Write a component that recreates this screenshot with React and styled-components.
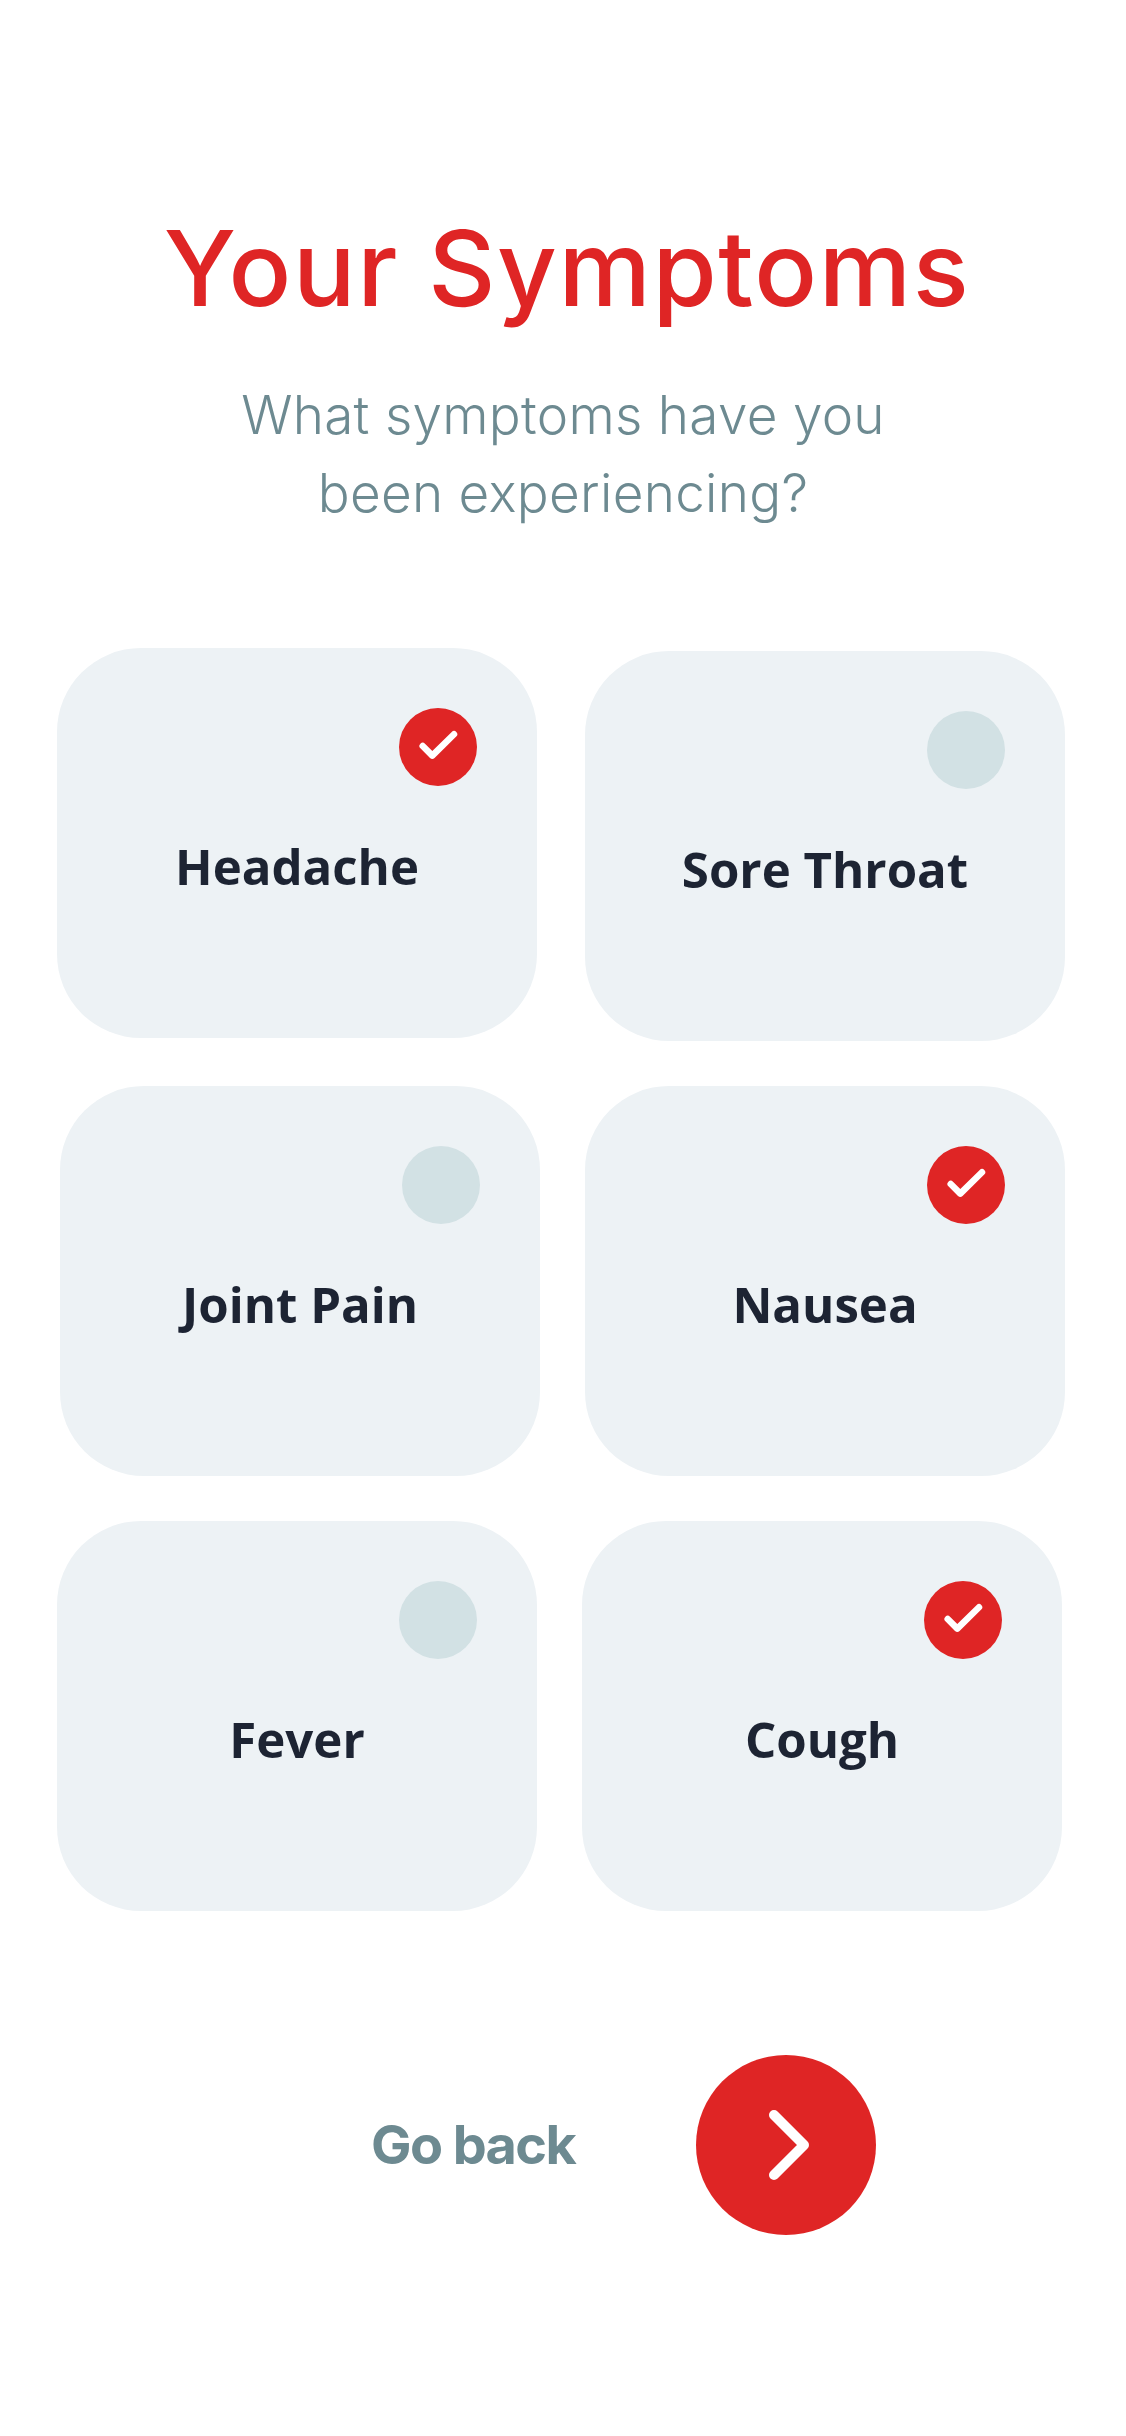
import React from "react";
import styled, { createGlobalStyle } from "styled-components";

const Global = createGlobalStyle`
  html, body { margin: 0; padding: 0; background: #ffffff; }
  #root { width: 1126px; height: 2436px; overflow: hidden; }
`;

const RED = "#df2525";
const SLATE = "#6d8a91";

const Page = styled.main`
  display: flex;
  flex-direction: column;
  box-sizing: border-box;
  width: 1126px;
  height: 2436px;
  padding-top: 208px;
  font-family: "Inter", "Noto Sans", sans-serif;
`;

const Title = styled.h1`
  margin: 0 0 0 8px;
  text-align: center;
  font-size: 104px;
  line-height: 120px;
  font-weight: 500;
  letter-spacing: 1.6px;
  color: ${RED};
`;

const Subtitle = styled.p`
  margin: 48px 0 0;
  text-align: center;
  font-size: 53px;
  line-height: 78px;
  font-weight: 300;
  letter-spacing: 0.3px;
  color: ${SLATE};
`;

const Grid = styled.section`
  display: flex;
  flex-direction: column;
  gap: 45px;
  margin-top: 116px;
`;

const Row = styled.div`
  display: flex;
  align-items: flex-start;
  gap: ${(p) => p.$gap}px;
  padding-left: ${(p) => p.$left}px;
`;

const Card = styled.div`
  position: relative;
  display: flex;
  justify-content: center;
  box-sizing: border-box;
  width: 480px;
  height: 390px;
  margin-top: ${(p) => p.$drop || 0}px;
  padding-top: 184px;
  border-radius: 84px;
  background: #edf2f5;
`;

const Label = styled.span`
  font-family: "Open Sans", "Noto Sans", sans-serif;
  font-size: 49.2px;
  line-height: 68px;
  font-weight: 700;
  color: #1d2433;
`;

const Mark = styled.span`
  position: absolute;
  top: 60px;
  right: 60px;
  display: flex;
  width: 78px;
  height: 78px;
  border-radius: 50%;
  background: ${(p) => (p.$on ? RED : "#d2e1e4")};
`;

const Footer = styled.footer`
  display: flex;
  align-items: center;
  gap: 119px;
  margin-top: 144px;
  padding-left: 371px;
`;

const Back = styled.span`
  width: 206px;
  font-size: 54px;
  line-height: 60px;
  font-weight: 700;
  letter-spacing: -1.6px;
  white-space: nowrap;
  color: ${SLATE};
`;

const Next = styled.button`
  display: flex;
  width: 180px;
  height: 180px;
  padding: 0;
  border: 0;
  border-radius: 50%;
  background: ${RED};
`;

const Check = () => (
  <svg width="78" height="78" viewBox="0 0 78 78" fill="none">
    <path d="M23.7 38L33.3 47.6L55 26.3" stroke="#fff" strokeWidth="6.5" strokeLinecap="round" strokeLinejoin="round" />
  </svg>
);

const Chevron = () => (
  <svg width="180" height="180" viewBox="0 0 180 180" fill="none">
    <path d="M78 60L108 90L78 120" stroke="#fff" strokeWidth="10" strokeLinecap="round" strokeLinejoin="round" />
  </svg>
);

const Symptom = ({ name, on, drop }) => (
  <Card $drop={drop}>
    <Mark $on={on}>{on && <Check />}</Mark>
    <Label>{name}</Label>
  </Card>
);

export default function App() {
  return (
    <>
      <Global />
      <Page>
        <Title>Your Symptoms</Title>
        <Subtitle>
          What symptoms have you
          <br />
          been experiencing?
        </Subtitle>
        <Grid>
          <Row $left={57} $gap={48}>
            <Symptom name="Headache" on />
            <Symptom name="Sore Throat" drop={3} />
          </Row>
          <Row $left={60} $gap={45}>
            <Symptom name="Joint Pain" />
            <Symptom name="Nausea" on />
          </Row>
          <Row $left={57} $gap={45}>
            <Symptom name="Fever" />
            <Symptom name="Cough" on />
          </Row>
        </Grid>
        <Footer>
          <Back>Go back</Back>
          <Next aria-label="Next">
            <Chevron />
          </Next>
        </Footer>
      </Page>
    </>
  );
}
